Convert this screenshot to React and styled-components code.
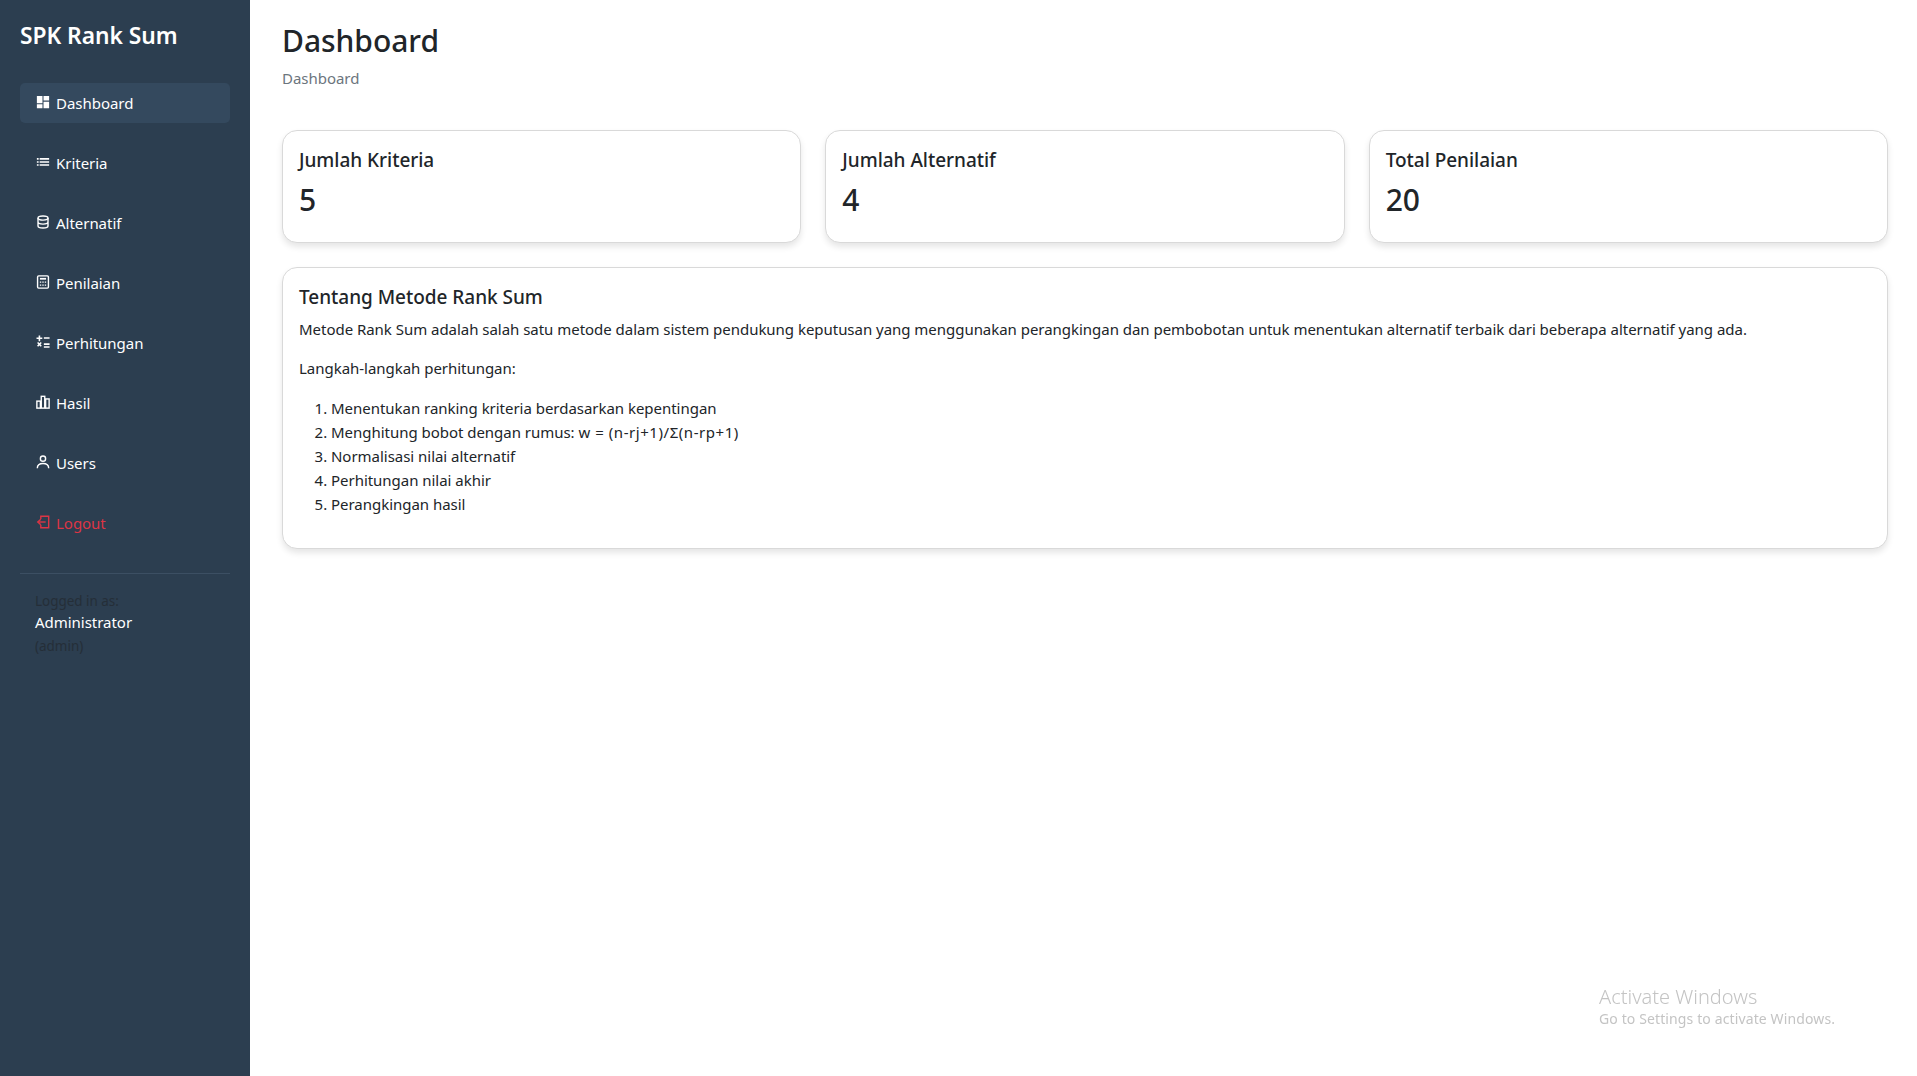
import React from "react";
import styled, { createGlobalStyle } from "styled-components";

const GlobalStyle = createGlobalStyle`
  * {
    box-sizing: border-box;
  }

  body {
    margin: 0;
    font-family: "Noto Sans", "Open Sans", sans-serif;
    font-size: 15px;
    line-height: 24px;
    letter-spacing: -0.03px;
    color: #212529;
    background: #fff;
  }
`;

const Layout = styled.div`
  display: flex;
  min-height: 1076px;
`;

const Sidebar = styled.aside`
  flex: 0 0 250px;
  padding: 21px 20px 20px;
  background: #2c3e50;
  color: #fff;
`;

const Brand = styled.h1`
  margin: 0 0 32px;
  font-size: 22.8px;
  line-height: 30px;
  font-weight: 600;
`;

const NavList = styled.nav`
  display: flex;
  flex-direction: column;
  gap: 20px;
  padding-bottom: 30px;
  border-bottom: 1px solid #3c4f63;
`;

const NavItem = styled.a`
  display: flex;
  align-items: center;
  gap: 6px;
  height: 40px;
  padding: 0 16px;
  border-radius: 5px;
  background: ${(p) => (p.$active ? "#34495e" : "transparent")};
  color: ${(p) => (p.$danger ? "#dc3545" : "#fff")};
  font-size: 15px;

  svg {
    flex: none;
    width: 14px;
    height: 14px;
    margin-top: -3px;
  }
`;

const UserBlock = styled.div`
  padding: 16px 15px 0;
  font-size: 15px;
  line-height: 22.5px;
`;

const Muted = styled.div`
  color: #212529;
  opacity: 0.6;
  font-size: 13.5px;
`;

const UserName = styled.div`
  margin: -2px 0 2px;
`;

const Main = styled.main`
  flex: 1;
  padding: 21px 29px 20px 32px;
`;

const PageTitle = styled.h2`
  margin: 0 0 5px;
  font-size: 30px;
  line-height: 40px;
  font-weight: 500;
`;

const Breadcrumb = styled.div`
  margin-bottom: 40px;
  color: #6c757d;
`;

const StatGrid = styled.div`
  display: grid;
  grid-template-columns: repeat(3, 1fr);
  gap: 24px;
  margin-bottom: 24px;
`;

const Card = styled.section`
  padding: 17px 16px 16px;
  border: 1px solid #d9d9d9;
  border-radius: 15px;
  background: #fff;
  box-shadow: 0 4px 6px rgba(0, 0, 0, 0.1);
`;

const CardTitle = styled.h3`
  margin: 0 0 ${(p) => (p.$stat ? "10px" : "8px")};
  font-size: 19px;
  line-height: 24px;
  font-weight: 500;
`;

const StatValue = styled.div`
  font-size: 30px;
  line-height: 36px;
  font-weight: 500;
  padding-bottom: 8px;
`;

const Paragraph = styled.p`
  margin: 0 0 ${(p) => (p.$tight ? "15px" : "16px")};
`;

const Steps = styled.ol`
  margin: 0 0 16px;
  padding-left: 32px;
`;

const Formula = styled.span`
  letter-spacing: 0.55px;
`;

const Watermark = styled.div`
  position: fixed;
  left: 1599px;
  top: 984px;
  color: #c4c4c4;
  font-size: 14px;
  line-height: 20px;
  letter-spacing: 0.12px;
`;

const WatermarkTitle = styled.div`
  font-size: 20px;
  line-height: 25px;
  font-weight: 300;
  letter-spacing: 0;
`;

const FillIcon = ({ d }) => (
  <svg viewBox="0 0 16 16" fill="currentColor">
    <path d={d} />
  </svg>
);

const LineIcon = ({ children }) => (
  <svg
    viewBox="0 0 16 16"
    fill="none"
    stroke="currentColor"
    strokeWidth="1.6"
  >
    {children}
  </svg>
);

const DashboardIcon = () => (
  <FillIcon d="M1 1h6.4v8.4H1zM8.6 1H15v5.4H8.6zM1 10.6h6.4V15H1zM8.6 7.6H15V15H8.6z" />
);

const ListIcon = () => (
  <FillIcon d="M1 3.5h2v1.8H1zM4.2 3.5H15v1.8H4.2zM1 7h2v1.8H1zM4.2 7H15v1.8H4.2zM1 10.5h2v1.8H1zM4.2 10.5H15v1.8H4.2z" />
);

const DatabaseIcon = () => (
  <LineIcon>
    <ellipse cx="8" cy="3.5" rx="5.7" ry="2.4" />
    <path d="M2.3 3.5v9c0 1.3 2.5 2.4 5.7 2.4s5.7-1.1 5.7-2.4v-9M2.3 8c0 1.3 2.5 2.4 5.7 2.4s5.7-1.1 5.7-2.4" />
  </LineIcon>
);

const CalculatorIcon = () => (
  <LineIcon>
    <rect x="1.8" y="1" width="12.4" height="14" rx="1.2" />
    <path d="M4.5 4.3h7" strokeWidth="2" />
    <path
      d="M4.4 8.2h1.6M7.2 8.2h1.6M10 8.2h1.6M4.4 11.6h1.6M7.2 11.6h1.6M10 11.6h1.6"
      strokeWidth="1.5"
    />
  </LineIcon>
);

const OperatorsIcon = () => (
  <FillIcon d="M3 .5h1.8v2.4h2.4v1.8H4.8v2.4H3V4.700H.6V2.900H3zM9 2.500h6.500v1.800H9zM9 9.500h6.500v1.800H9zM9 12.800h6.500v1.800H9zM1.200 9.200l1.200-1.200 1.500 1.500 1.500-1.500 1.200 1.200-1.500 1.500 1.500 1.500-1.200 1.200-1.500-1.500-1.500 1.500-1.200-1.200 1.500-1.500z" />
);

const BarsIcon = () => (
  <LineIcon>
    <rect x="1" y="7" width="4" height="8" />
    <rect x="6" y="1.500" width="4" height="13.500" />
    <rect x="11" y="4.500" width="4" height="10.500" />
  </LineIcon>
);

const PersonIcon = () => (
  <LineIcon>
    <circle cx="8" cy="4.200" r="3" />
    <path d="M1.500 15.200c0-3.500 2.700-5.500 6.500-5.500s6.500 2 6.500 5.500" />
  </LineIcon>
);

const LogoutIcon = () => (
  <LineIcon>
    <path d="M5.500 4.500V1.500h9v13h-9v-3" />
    <path d="M11 8H2.500" />
    <path d="M5.500 4.800 2 8l3.500 3.200" />
  </LineIcon>
);

const navItems = [
  { label: "Dashboard", Icon: DashboardIcon, active: true },
  { label: "Kriteria", Icon: ListIcon },
  { label: "Alternatif", Icon: DatabaseIcon },
  { label: "Penilaian", Icon: CalculatorIcon },
  { label: "Perhitungan", Icon: OperatorsIcon },
  { label: "Hasil", Icon: BarsIcon },
  { label: "Users", Icon: PersonIcon },
  { label: "Logout", Icon: LogoutIcon, danger: true },
];

const stats = [
  { title: "Jumlah Kriteria", value: 5 },
  { title: "Jumlah Alternatif", value: 4 },
  { title: "Total Penilaian", value: 20 },
];

export default function App() {
  return (
    <>
      <GlobalStyle />
      <Layout>
        <Sidebar>
          <Brand>SPK Rank Sum</Brand>
          <NavList>
            {navItems.map(({ label, Icon, active, danger }) => (
              <NavItem key={label} $active={active} $danger={danger}>
                <Icon />
                {label}
              </NavItem>
            ))}
          </NavList>
          <UserBlock>
            <Muted>Logged in as:</Muted>
            <UserName>Administrator</UserName>
            <Muted>(admin)</Muted>
          </UserBlock>
        </Sidebar>
        <Main>
          <PageTitle>Dashboard</PageTitle>
          <Breadcrumb>Dashboard</Breadcrumb>
          <StatGrid>
            {stats.map((stat) => (
              <Card key={stat.title}>
                <CardTitle $stat>{stat.title}</CardTitle>
                <StatValue>{stat.value}</StatValue>
              </Card>
            ))}
          </StatGrid>
          <Card>
            <CardTitle>Tentang Metode Rank Sum</CardTitle>
            <Paragraph $tight>
              Metode Rank Sum adalah salah satu metode dalam sistem pendukung
              keputusan yang menggunakan perangkingan dan pembobotan untuk
              menentukan alternatif terbaik dari beberapa alternatif yang ada.
            </Paragraph>
            <Paragraph>Langkah-langkah perhitungan:</Paragraph>
            <Steps>
              <li>Menentukan ranking kriteria berdasarkan kepentingan</li>
              <li>
                Menghitung bobot dengan rumus:{" "}
                <Formula>w = (n-rj+1)/Σ(n-rp+1)</Formula>
              </li>
              <li>Normalisasi nilai alternatif</li>
              <li>Perhitungan nilai akhir</li>
              <li>Perangkingan hasil</li>
            </Steps>
          </Card>
        </Main>
      </Layout>
      <Watermark>
        <WatermarkTitle>Activate Windows</WatermarkTitle>
        Go to Settings to activate Windows.
      </Watermark>
    </>
  );
}
